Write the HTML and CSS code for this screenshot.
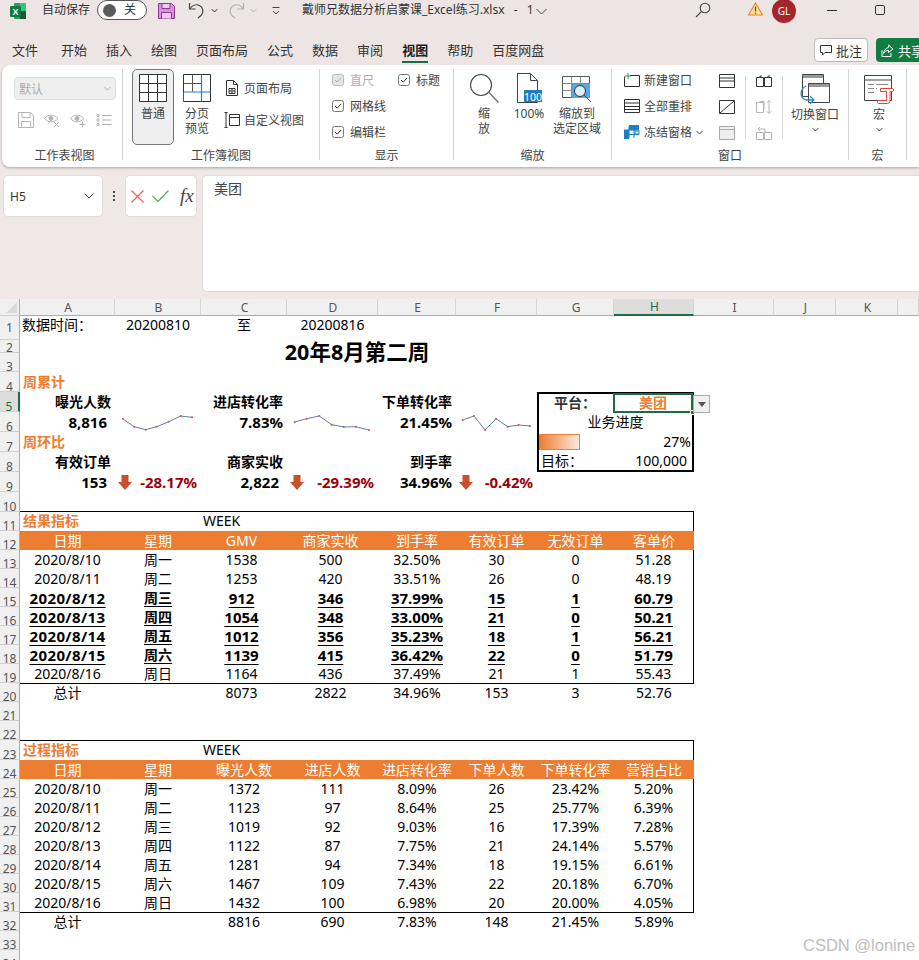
FILE: index.html
```html
<!DOCTYPE html>
<html lang="zh-CN">
<head>
<meta charset="utf-8">
<title>Excel</title>
<link rel="stylesheet" href="styles.css">
</head>
<body>
<header class="titlebar">
  <svg class="tb-logo" width="16" height="16" viewBox="0 0 16 16"><rect x="4" y="0" width="12" height="16" rx="1" fill="#21A366"/><rect x="10" y="8" width="6" height="8" fill="#185C37"/><rect x="10" y="0" width="6" height="8" fill="#33C481"/><rect x="0" y="3" width="11" height="11" rx="1" fill="#107C41"/><text x="5.5" y="12" text-anchor="middle" font-size="9" font-weight="700" fill="#fff" font-family="Liberation Sans">X</text></svg>
  <span class="tb-auto">自动保存</span>
  <span class="toggle"><i class="knob"></i><b>关</b></span>
  <svg class="tb-save" width="17" height="16" viewBox="0 0 17 16"><path d="M.5.5h13l3 3v12H.5z" fill="#DA8FDC" stroke="#8E3A90"/><path d="M4 .5h8v5H4zM3.500 15.500v-6h10v6" fill="#EFCDEF" stroke="#8E3A90"/></svg>
  <svg class="tb-undo" width="18" height="18" viewBox="0 0 18 18" fill="none" stroke="#444" stroke-width="1.200"><path d="M1.500 2v6h6"/><path d="M1.800 8C4 4.500 8 3 11.500 4.500 15.500 6.500 16 11.500 13 14.500L10 17"/></svg>
  <svg class="chev tb-c1" width="7" height="5" viewBox="0 0 7 5" fill="none" stroke="#444"><path d="M.5 1l3 3 3-3"/></svg>
  <svg class="tb-redo" width="18" height="18" viewBox="0 0 18 18" fill="none" stroke="#B5B0B0" stroke-width="1.200"><path d="M16.500 2v6h-6"/><path d="M16.200 8C14 4.500 10 3 6.500 4.500 2.500 6.500 2 11.500 5 14.500L8 17"/></svg>
  <svg class="chev tb-c2" width="7" height="5" viewBox="0 0 7 5" fill="none" stroke="#B5B0B0"><path d="M.5 1l3 3 3-3"/></svg>
  <svg class="tb-cust" width="8" height="8" viewBox="0 0 8 8" fill="none" stroke="#444"><path d="M.5 .5h7M1 4l3 3 3-3"/></svg>
  <span class="tb-file">戴师兄数据分析启蒙课_Excel练习.xlsx&nbsp; - &nbsp;1</span>
  <svg class="chev tb-c3" width="11" height="7" viewBox="0 0 11 7" fill="none" stroke="#444"><path d="M.5 1l5 5 5-5"/></svg>
  <svg class="tb-search" width="16" height="16" viewBox="0 0 16 16" fill="none" stroke="#444" stroke-width="1.100"><circle cx="10" cy="6" r="4.800"/><path d="M6.500 9.500L1 15"/></svg>
  <svg class="tb-warn" width="15" height="14" viewBox="0 0 15 14"><path d="M7.500 1L14.500 13H.5z" fill="#FCE39A" stroke="#E8862A" stroke-width="1.100"/><path d="M7.500 4.500v5M7.500 10.500v1.200" stroke="#7A4A10" stroke-width="1.300"/></svg>
  <span class="avatar">GL</span>
  <span class="tb-min"></span>
  <span class="tb-max"></span>
</header>

<nav class="tabs">
  <span class="tab first">文件</span><span class="tab">开始</span><span class="tab">插入</span><span class="tab">绘图</span><span class="tab">页面布局</span><span class="tab">公式</span><span class="tab">数据</span><span class="tab">审阅</span><span class="tab active">视图</span><span class="tab">帮助</span><span class="tab">百度网盘</span>
  <span class="btn-note"><svg width="12" height="12" viewBox="0 0 12 12" fill="none" stroke="#333"><path d="M.5 1.500h11v7H5L2.500 11V8.500h-2z"/></svg>批注</span>
  <span class="btn-share"><svg width="13" height="13" viewBox="0 0 13 13" fill="none" stroke="#fff"><path d="M1 6v6.500h9V9M7.500 1L12 5 7.500 8.500V6.500C5 6.500 3.500 7.500 2.500 9.500 3 6 5 4 7.500 3.500z"/></svg>共享</span>
</nav>

<section class="ribbon">
  <div class="group g1">
    <div class="body body-col">
      <div class="select"><span>默认</span><svg width="7" height="5" viewBox="0 0 7 5" fill="none" stroke="#aaa"><path d="M.5 1l3 3 3-3"/></svg></div>
      <div class="mini-icons">
        <svg width="16" height="16" viewBox="0 0 16 16" fill="none" stroke="#B4B4B4"><path d="M.5.500h12l3 3v12H.5zM4 .5v5h8v-5M3.500 15.500v-6h9v6"/></svg>
        <svg width="16" height="16" viewBox="0 0 16 16" fill="none" stroke="#B4B4B4"><path d="M.5 6.500C4 2 10 2 14 6.500 10 11 4 11 .5 6.500z"/><circle cx="7" cy="6.500" r="2" fill="#B4B4B4"/><path d="M10 10l5 5M15 10l-5 5"/></svg>
        <svg width="16" height="16" viewBox="0 0 16 16" fill="none" stroke="#B4B4B4"><path d="M.5 6.500C4 2 10 2 14 6.500 10 11 4 11 .5 6.500z"/><circle cx="7" cy="6.500" r="2" fill="#B4B4B4"/><path d="M12.500 9.500v6M9.500 12.500h6"/></svg>
        <svg width="16" height="16" viewBox="0 0 16 16" fill="none" stroke="#B4B4B4"><path d="M1 2.500h2v2H1zM1 7h2v2H1zM1 11.500h2v2H1zM6 3.500h9.500M6 8h9.500M6 12.500h9.500"/></svg>
      </div>
    </div>
    <div class="glabel gl1">工作表视图</div>
  </div>

  <div class="group g2">
    <div class="body body-row">
      <div class="big normal">
        <svg width="28" height="28" viewBox="0 0 28 28" fill="#fff" stroke="#333"><path d="M.5.500h27v27H.5zM9.500.5v27M18.500.5v27M.5 9.500h27M.5 18.500h27"/></svg>
        <span>普通</span>
      </div>
      <div class="big pagebreak">
        <svg width="28" height="28" viewBox="0 0 28 28" fill="none"><path d="M.5.500h27v27H.5z" fill="#fff" stroke="#333"/><path d="M9.500.5v17M.5 9.500h18M.5 27V18" stroke="#555"/><path d="M18.500.5v27M.5 18h27" stroke="#1F7FC4" stroke-width="1.200"/></svg>
        <span>分页<br>预览</span>
      </div>
      <div class="wb-list">
        <div class="row"><svg width="16" height="16" viewBox="0 0 16 16" fill="none" stroke="#333"><path d="M2.500.5h7l4 4v11h-11zM9.500.5v4h4M5 8.500h6v5H5zM5 11h6M8 8.500v5"/></svg>页面布局</div>
        <div class="row"><svg width="16" height="16" viewBox="0 0 16 16" fill="none" stroke="#333"><path d="M.5.500h3M2 .5v15M.5 15.500h3M5.500 2.500h10v11h-10zM5.500 5.500h10"/></svg>自定义视图</div>
      </div>
    </div>
    <div class="glabel">工作簿视图</div>
  </div>

  <div class="group g3">
    <div class="body checks">
      <label class="check off"><svg width="12" height="12" viewBox="0 0 12 12"><rect x=".5" y=".5" width="11" height="11" rx="2" fill="#E6E6E6" stroke="#BBB"/><path d="M3 6l2.200 2.200L9 4" fill="none" stroke="#AAA"/></svg>直尺</label>
      <label class="check"><svg width="12" height="12" viewBox="0 0 12 12"><rect x=".5" y=".5" width="11" height="11" rx="2" fill="#fff" stroke="#777"/><path d="M3 6l2.200 2.200L9 4" fill="none" stroke="#333"/></svg>标题</label>
      <label class="check wide"><svg width="12" height="12" viewBox="0 0 12 12"><rect x=".5" y=".5" width="11" height="11" rx="2" fill="#fff" stroke="#777"/><path d="M3 6l2.200 2.200L9 4" fill="none" stroke="#333"/></svg>网格线</label>
      <label class="check wide"><svg width="12" height="12" viewBox="0 0 12 12"><rect x=".5" y=".5" width="11" height="11" rx="2" fill="#fff" stroke="#777"/><path d="M3 6l2.200 2.200L9 4" fill="none" stroke="#333"/></svg>编辑栏</label>
    </div>
    <div class="glabel">显示</div>
  </div>

  <div class="group g4">
    <div class="body body-row">
      <div class="big zoom1">
        <svg width="30" height="30" viewBox="0 0 30 30" fill="none" stroke="#444" stroke-width="1.100"><circle cx="12" cy="12" r="10.500"/><path d="M20 19.500L29.500 29.500" stroke="#666"/></svg>
        <span>缩<br>放</span>
      </div>
      <div class="big zoom2">
        <svg width="26" height="30" viewBox="0 0 26 30"><path d="M1.500.5h13l7 7v22h-20z" fill="#fff" stroke="#444"/><path d="M14.500.5v7h7" fill="none" stroke="#444"/><rect x="8" y="17" width="18" height="12" fill="#1C7FC3"/><text x="17" y="27.500" font-size="10.500" text-anchor="middle" fill="#fff" font-family="Noto Sans">100</text></svg>
        <span>100%</span>
      </div>
      <div class="big zoom3">
        <svg width="30" height="27" viewBox="0 0 30 27" fill="none"><path d="M.5.500h27v21H.5z" stroke="#555"/><path d="M9.500.5v21M18.500.5v7M.5 7.500h27M.5 14.500h9" stroke="#888"/><rect x="10" y="8" width="18" height="14" fill="#5AA9DE"/><circle cx="18" cy="15" r="5.500" fill="#DCEEFA" stroke="#333"/><path d="M22 19l7 7" stroke="#444"/></svg>
        <span>缩放到<br>选定区域</span>
      </div>
    </div>
    <div class="glabel">缩放</div>
  </div>

  <div class="group g5">
    <div class="body body-row">
      <div class="win-list">
        <div class="row"><svg width="16" height="14" viewBox="0 0 16 14" fill="none"><path d="M.5 3.500v10h15v-11H6" stroke="#333"/><path d="M4 0v6M1 3h6" stroke="#2E9C4A"/></svg>新建窗口</div>
        <div class="row"><svg width="16" height="14" viewBox="0 0 16 14" fill="none" stroke="#333"><path d="M.5.500h15v13H.5zM.5 4h15M.5 7.500h15M.5 10.500h15"/></svg>全部重排</div>
        <div class="row"><svg width="16" height="14" viewBox="0 0 16 14"><path d="M5 1v12M10 1v12M0 5h15M0 9.500h15" stroke="#1C7FC3"/><rect x="0" y="5" width="5" height="9" fill="#1C7FC3"/><rect x="5" y="0" width="10" height="5" fill="#1C7FC3"/><rect x="11" y="6" width="4" height="3" fill="#fff" stroke="#1C7FC3"/></svg>冻结窗格<svg class="chev-in" width="7" height="5" viewBox="0 0 7 5" fill="none" stroke="#444"><path d="M.5 1l3 3 3-3"/></svg></div>
      </div>
      <div class="win-icons col-a">
        <svg width="16" height="14" viewBox="0 0 16 14" fill="none" stroke="#333"><path d="M.5.500h15v13H.5zM.5 4h15M.5 7h15"/></svg>
        <svg width="16" height="14" viewBox="0 0 16 14" fill="none" stroke="#333"><path d="M.5.500h15v13H.5zM1 13L15 1"/></svg>
        <svg width="16" height="14" viewBox="0 0 16 14" fill="#EEE" stroke="#AAA"><path d="M.5.500h15v13H.5zM.5 3.500h15"/></svg>
      </div>
      <span class="vsep"></span>
      <div class="win-icons col-b">
        <svg width="16" height="14" viewBox="0 0 16 14" fill="none" stroke="#333"><path d="M.5 3.500h7v9h-7zM8.500 3.500h7v9h-7zM3 3.500L5 1.500V3M11 3.500L13 1.500V3"/></svg>
        <svg width="16" height="14" viewBox="0 0 16 14" fill="none" stroke="#B4B4B4"><path d="M.5 2.500h7v10h-7zM3 2.500l2-1h3v8M13 .5v13M11 2.500l2-2 2 2M11 11.500l2 2 2-2"/></svg>
        <svg width="16" height="14" viewBox="0 0 16 14" fill="none" stroke="#B4B4B4"><path d="M.5 6.500h7v7h-7zM8.500 6.500h7v7h-7zM2 3h7v3M2 3l2-2M2 3l2 2"/></svg>
      </div>
      <span class="vsep"></span>
      <div class="big switch">
        <svg width="32" height="30" viewBox="0 0 32 30" fill="none"><path d="M3.500.5h21v22h-21z" fill="#fff" stroke="#444"/><rect x="4" y="1" width="20" height="3" fill="#999"/><path d="M9.500 9.500h21v19h-21z" fill="#fff" stroke="#444"/><rect x="10" y="10" width="20" height="3" fill="#999"/><path d="M7 12C1 15 0 24 7 26h8M11 22l4 4-4 4" stroke="#2B8AD0" stroke-width="1.300"/></svg>
        <span>切换窗口</span>
        <svg class="chev-b" width="7" height="5" viewBox="0 0 7 5" fill="none" stroke="#444"><path d="M.5 1l3 3 3-3"/></svg>
      </div>
    </div>
    <div class="glabel">窗口</div>
  </div>

  <div class="group g6">
    <div class="body body-row">
      <div class="big macro">
        <svg width="31" height="29" viewBox="0 0 31 29" fill="none"><path d="M.5.500h27v25H.5zM.5 5h27" stroke="#444"/><path d="M4 9.500h6M12 9.500h12M4 13.500h6M12 13.500h1M4 17.500h6" stroke="#888"/><path d="M16.500 13.500h12c1.500 0 1.500 3 0 3H26V25c0 2.500-1 3.500-2.500 3.500h-9c-1.500 0-1.500-3-.5-3h9c-.5 0-.5-1-.5-2V16.500h-6z" fill="#fff" stroke="#E8403A"/></svg>
        <span>宏</span>
        <svg class="chev-b" width="7" height="5" viewBox="0 0 7 5" fill="none" stroke="#444"><path d="M.5 1l3 3 3-3"/></svg>
      </div>
    </div>
    <div class="glabel">宏</div>
  </div>
</section>

<section class="formula">
  <div class="namebox"><span>H5</span><svg width="10" height="6" viewBox="0 0 10 6" fill="none" stroke="#444"><path d="M.5.500l4.500 4.500 4.500-4.500"/></svg></div>
  <span class="dots"></span>
  <div class="funcbox">
    <svg width="13" height="13" viewBox="0 0 13 13" fill="none" stroke="#E8615C" stroke-width="1.200"><path d="M.5.500l12 12M12.500.5l-12 12"/></svg>
    <svg width="17" height="12" viewBox="0 0 17 12" fill="none" stroke="#55A868" stroke-width="1.200"><path d="M.5 6l5.500 5.500L16.500.5"/></svg>
    <span class="fx">fx</span>
  </div>
  <div class="fbar">美团</div>
</section>

<main class="sheetwrap">
<table class="sheet">
  <colgroup><col class="c0"><col class="ca"><col class="cb"><col class="cc"><col class="cd"><col class="ce"><col class="cf"><col class="cg"><col class="ch"><col class="ci"><col class="cj"><col class="ck"><col class="cl"></colgroup>
  <tr class="hdr"><th class="corner"><i></i></th><th>A</th><th>B</th><th>C</th><th>D</th><th>E</th><th>F</th><th>G</th><th class="hsel">H</th><th>I</th><th>J</th><th>K</th><th></th></tr>
  <tr class="h24"><th>1</th><td class="left">数据时间：</td><td>20200810</td><td>至</td><td>20200816</td><td colspan="8"></td></tr>
  <tr class="h13"><th>2</th><td colspan="8" rowspan="2" class="main-title">20年8月第二周</td><td colspan="4" rowspan="2"></td></tr>
  <tr class="h19"><th>3</th></tr>
  <tr class="h20"><th>4</th><td colspan="12" class="sect">周累计</td></tr>
  <tr class="h20"><th class="rsel">5</th><td class="kl">曝光人数</td><td></td><td class="kl">进店转化率</td><td></td><td class="kl">下单转化率</td><td></td><td class="bx-tl plat">平台：</td><td class="bx-tr cur">美团<i class="selbox"></i><i class="handle"></i><i class="dd"></i></td><td colspan="4"></td></tr>
  <tr class="h20"><th>6</th><td class="kv">8,816</td><td><svg class="spark" width="86" height="20" viewBox="115 412 86 20"><polyline points="122.700,418.700 134,426.700 145.700,429.700 156.700,426.700 168.700,421.700 180.700,416 192,417.300"/><g><circle cx="122.700" cy="418.700" r="1"/><circle cx="134" cy="426.700" r="1"/><circle cx="145.700" cy="429.700" r="1"/><circle cx="156.700" cy="426.700" r="1"/><circle cx="168.700" cy="421.700" r="1"/><circle cx="180.700" cy="416" r="1"/><circle cx="192" cy="417.300" r="1"/></g></svg></td><td class="kv kp">7.83%</td><td><svg class="spark" width="91" height="20" viewBox="287 412 91 20"><polyline points="294.700,422 306.700,418.700 319.300,416 331.700,424.700 343.700,427 355.700,426.700 369,430"/><g><circle cx="294.700" cy="422" r="1"/><circle cx="306.700" cy="418.700" r="1"/><circle cx="319.300" cy="416" r="1"/><circle cx="331.700" cy="424.700" r="1"/><circle cx="343.700" cy="427" r="1"/><circle cx="355.700" cy="426.700" r="1"/><circle cx="369" cy="430" r="1"/></g></svg></td><td class="kv kp">21.45%</td><td><svg class="spark" width="81" height="20" viewBox="456 412 81 20"><polyline points="462.700,420 474,416 485,430 496,418.700 507.700,426.700 518.700,425 530,426"/><g><circle cx="462.700" cy="420" r="1"/><circle cx="474" cy="416" r="1"/><circle cx="485" cy="430" r="1"/><circle cx="496" cy="418.700" r="1"/><circle cx="507.700" cy="426.700" r="1"/><circle cx="518.700" cy="425" r="1"/><circle cx="530" cy="426" r="1"/></g></svg></td><td colspan="2" class="bx-lr">业务进度</td><td colspan="4"></td></tr>
  <tr class="h20"><th>7</th><td colspan="6" class="sect">周环比</td><td class="bx-l"><span class="databar"></span></td><td class="bx-r pct">27%</td><td colspan="4"></td></tr>
  <tr class="h20"><th>8</th><td class="kl">有效订单</td><td></td><td class="kl">商家实收</td><td></td><td class="kl">到手率</td><td></td><td class="bx-bl tgt">目标：</td><td class="bx-br goal">100,000</td><td colspan="4"></td></tr>
  <tr class="h20"><th>9</th><td class="kv">153</td><td class="delta"><svg class="arrow" width="14" height="15" viewBox="0 0 14 15"><path d="M3.500 0h7v7H14L7 15 0 7h3.500z" fill="#C9502F"/></svg>-28.17%</td><td class="kv">2,822</td><td class="delta"><svg class="arrow" width="14" height="15" viewBox="0 0 14 15"><path d="M3.500 0h7v7H14L7 15 0 7h3.500z" fill="#C9502F"/></svg>-29.39%</td><td class="kv kp">34.96%</td><td class="delta"><svg class="arrow" width="14" height="15" viewBox="0 0 14 15"><path d="M3.500 0h7v7H14L7 15 0 7h3.500z" fill="#C9502F"/></svg>-0.42%</td><td colspan="6"></td></tr>
  <tr class="h20 under"><th>10</th><td colspan="8"></td><td colspan="4"></td></tr>
  <tr class="h19 lift"><th>11</th><td class="sect">结果指标</td><td></td><td class="wk">WEEK</td><td colspan="4"></td><td class="edge"></td><td colspan="4"></td></tr>
  <tr class="h19 head t1"><th>12</th><td>日期</td><td>星期</td><td>GMV</td><td>商家实收</td><td>到手率</td><td>有效订单</td><td>无效订单</td><td>客单价</td><td class="blank" colspan="4"></td></tr>
  <tr class="h19 t1"><th>13</th><td>2020/8/10</td><td>周一</td><td>1538</td><td>500</td><td>32.50%</td><td>30</td><td>0</td><td class="edge">51.28</td><td colspan="4"></td></tr>
  <tr class="h19 t1"><th>14</th><td>2020/8/11</td><td>周二</td><td>1253</td><td>420</td><td>33.51%</td><td>26</td><td>0</td><td class="edge">48.19</td><td colspan="4"></td></tr>
  <tr class="h19 t1 hl"><th>15</th><td>2020/8/12</td><td>周三</td><td>912</td><td>346</td><td>37.99%</td><td>15</td><td>1</td><td class="edge">60.79</td><td colspan="4"></td></tr>
  <tr class="h19 t1 hl"><th>16</th><td>2020/8/13</td><td>周四</td><td>1054</td><td>348</td><td>33.00%</td><td>21</td><td>0</td><td class="edge">50.21</td><td colspan="4"></td></tr>
  <tr class="h19 t1 hl"><th>17</th><td>2020/8/14</td><td>周五</td><td>1012</td><td>356</td><td>35.23%</td><td>18</td><td>1</td><td class="edge">56.21</td><td colspan="4"></td></tr>
  <tr class="h19 t1 hl"><th>18</th><td>2020/8/15</td><td>周六</td><td>1139</td><td>415</td><td>36.42%</td><td>22</td><td>0</td><td class="edge">51.79</td><td colspan="4"></td></tr>
  <tr class="h19 t1"><th>19</th><td>2020/8/16</td><td>周日</td><td>1164</td><td>436</td><td>37.49%</td><td>21</td><td>1</td><td class="edge">55.43</td><td colspan="4"></td></tr>
  <tr class="h19 t1 total"><th>20</th><td>总计</td><td></td><td>8073</td><td>2822</td><td>34.96%</td><td>153</td><td>3</td><td>52.76</td><td class="blank" colspan="4"></td></tr>
  <tr class="h19"><th>21</th><td colspan="12"></td></tr>
  <tr class="h19"><th>22</th><td colspan="12"></td></tr>
  <tr class="h20 total lift"><th>23</th><td class="sect">过程指标</td><td></td><td class="wk">WEEK</td><td colspan="4"></td><td class="edge"></td><td class="blank" colspan="4"></td></tr>
  <tr class="h19 head"><th>24</th><td>日期</td><td>星期</td><td>曝光人数</td><td>进店人数</td><td>进店转化率</td><td>下单人数</td><td>下单转化率</td><td>营销占比</td><td class="blank" colspan="4"></td></tr>
  <tr class="h19"><th>25</th><td>2020/8/10</td><td>周一</td><td>1372</td><td>111</td><td>8.09%</td><td>26</td><td>23.42%</td><td class="edge">5.20%</td><td colspan="4"></td></tr>
  <tr class="h19"><th>26</th><td>2020/8/11</td><td>周二</td><td>1123</td><td>97</td><td>8.64%</td><td>25</td><td>25.77%</td><td class="edge">6.39%</td><td colspan="4"></td></tr>
  <tr class="h19"><th>27</th><td>2020/8/12</td><td>周三</td><td>1019</td><td>92</td><td>9.03%</td><td>16</td><td>17.39%</td><td class="edge">7.28%</td><td colspan="4"></td></tr>
  <tr class="h19"><th>28</th><td>2020/8/13</td><td>周四</td><td>1122</td><td>87</td><td>7.75%</td><td>21</td><td>24.14%</td><td class="edge">5.57%</td><td colspan="4"></td></tr>
  <tr class="h19"><th>29</th><td>2020/8/14</td><td>周五</td><td>1281</td><td>94</td><td>7.34%</td><td>18</td><td>19.15%</td><td class="edge">6.61%</td><td colspan="4"></td></tr>
  <tr class="h19"><th>30</th><td>2020/8/15</td><td>周六</td><td>1467</td><td>109</td><td>7.43%</td><td>22</td><td>20.18%</td><td class="edge">6.70%</td><td colspan="4"></td></tr>
  <tr class="h19"><th>31</th><td>2020/8/16</td><td>周日</td><td>1432</td><td>100</td><td>6.98%</td><td>20</td><td>20.00%</td><td class="edge">4.05%</td><td colspan="4"></td></tr>
  <tr class="h19 total"><th>32</th><td>总计</td><td></td><td>8816</td><td>690</td><td>7.83%</td><td>148</td><td>21.45%</td><td>5.89%</td><td class="blank" colspan="4"></td></tr>
  <tr class="h19"><th>33</th><td colspan="12"></td></tr>
  <tr class="h19"><th>34</th><td colspan="12"></td></tr>
</table>
<div class="watermark">CSDN @lonine</div>
</main>
</body>
</html>
```
FILE: styles.css
```css
* { box-sizing: border-box; }
html, body { margin: 0; padding: 0; }
body {
  width: 919px;
  height: 960px;
  overflow: hidden;
  background: #EFE8E6;
  color: #333;
  font-family: "Noto Sans", "Noto Sans CJK SC", sans-serif;
  font-size: 12px;
}
svg { display: block; flex: none; }

/* title bar */
.titlebar { height: 36px; display: flex; align-items: flex-start; background: #EDE5E4; position: relative; }
.titlebar > * { flex: none; }
.tb-logo { margin: 3px 0 0 10px; }
.tb-auto { margin: 1px 0 0 16px; line-height: 18px; width: 48px; }
.toggle { margin: 0 0 0 7px; width: 50px; height: 20px; border: 1px solid #555; border-radius: 10px; background: #fff; display: flex; align-items: center; padding-left: 5px; }
.knob { width: 13px; height: 13px; border-radius: 50%; background: #5C5C5C; }
.toggle b { font-weight: 400; margin-left: 8px; line-height: 14px; }
.tb-save { margin: 3px 0 0 11px; }
.tb-undo { margin: 1px 0 0 13px; }
.tb-c1 { margin: 8px 0 0 5px; }
.tb-redo { margin: 1px 0 0 9px; }
.tb-c2 { margin: 8px 0 0 5px; }
.tb-cust { margin: 7px 0 0 15px; }
.tb-file { margin: 1px 0 0 22px; line-height: 18px; width: 231px; white-space: nowrap; word-spacing: 1.500px; }
.tb-c3 { margin: 8px 0 0 3px; }
.tb-search { margin: 2px 0 0 148px; }
.tb-warn { margin: 2px 0 0 37px; }
.avatar { margin: -1px 0 0 9px; width: 24px; height: 24px; border-radius: 50%; background: #A4262C; color: #fff; font-size: 10px; text-align: center; line-height: 24px; }
.tb-min { margin: 10px 0 0 31px; width: 10px; height: 1px; background: #333; }
.tb-max { margin: 5px 0 0 38px; width: 10px; height: 10px; border: 1px solid #333; border-radius: 2px; }

/* tabs */
.tabs { height: 29px; display: flex; align-items: flex-start; padding-left: 12px; background: #EDE5E4; font-size: 13px; position: relative; }
.tab { margin-right: 19px; line-height: 18px; margin-top: 5px; height: 26px; white-space: nowrap; flex: none; }
.tab.first { margin-right: 23px; }
.tab.active { font-weight: 700; color: #222; position: relative; }
.tab.active::after { content: ""; position: absolute; left: 0; right: 0; top: 20px; height: 2px; background: #1E6C41; }
.btn-note { position: absolute; left: 814px; top: 2px; width: 54px; height: 24px; background: #fff; border: 1px solid #BBB; border-radius: 4px; display: flex; align-items: center; justify-content: center; gap: 4px; font-size: 13px; }
.btn-share { position: absolute; left: 876px; top: 2px; width: 60px; height: 24px; background: #107C41; color: #fff; border-radius: 4px; display: flex; align-items: center; gap: 4px; padding-left: 5px; font-size: 13px; }

/* ribbon */
.ribbon { margin-left: 2px; height: 102px; padding-top: 4px; background: #fff; border-radius: 8px 0 0 8px; box-shadow: 0 1px 3px rgba(0,0,0,.3); display: flex; color: #444; }
.group { height: 91px; border-right: 1px solid #D4D4D4; display: flex; flex-direction: column; flex: none; }
.g1 { width: 121px; } .g2 { width: 197px; } .g3 { width: 134px; } .g4 { width: 158px; } .g5 { width: 237px; } .g6 { width: 58px; }
.body { flex: 1; min-height: 0; }
.glabel { height: 16px; line-height: 16px; text-align: center; margin-bottom: -3px; color: #444; font-size: 12px; position: relative; top: 1px; }
.gl1 { padding-left: 5px; }
.body-col { padding: 8px 0 0 12px; display: flex; flex-direction: column; }
.body-row { display: flex; align-items: flex-start; }
.select { width: 102px; height: 23px; border: 1px solid #DDD; border-radius: 4px; background: #EFEFEF; display: flex; align-items: center; justify-content: space-between; padding: 0 4px; color: #ABABAB; }
.mini-icons { margin: 12px 0 0 4px; display: flex; gap: 10px; }
.big { display: flex; flex-direction: column; align-items: center; flex: none; line-height: 15px; text-align: center; }
.big span { margin-top: 3px; white-space: nowrap; }
.normal { margin-left: 9px; width: 42px; height: 76px; border: 1px solid #777; border-radius: 5px; background: #EFEFEF; padding-top: 4px; }
.normal span { margin-top: 4px; }
.pagebreak { margin-left: 9px; width: 28px; padding-top: 5px; }
.pagebreak span { margin-top: 4px; }
.row { display: flex; align-items: center; gap: 4px; white-space: nowrap; }
.wb-list { margin-left: 13px; padding-top: 11px; display: flex; flex-direction: column; gap: 16px; }
.wb-list .row { height: 16px; }
.checks { padding: 4px 0 0 12px; display: grid; grid-template-columns: 66px auto; grid-auto-rows: 14px; row-gap: 12px; justify-content: start; }
.check { display: flex; align-items: center; gap: 6px; white-space: nowrap; }
.check.off { color: #ADADAD; }
.wide { grid-column: 1 / span 2; }
.zoom1 { margin-left: 14px; width: 32px; padding-top: 4px; }
.zoom2 { margin-left: 9px; width: 40px; padding-top: 4px; }
.zoom3 { margin-left: -2px; width: 60px; padding-top: 7px; }
.win-list { margin-left: 12px; width: 80px; padding-top: 3px; display: flex; flex-direction: column; gap: 12px; }
.win-list .row { height: 16px; margin-bottom: -2px; }
.win-icons { padding-top: 5px; display: flex; flex-direction: column; gap: 12px; }
.col-a { margin-left: 15px; }
.col-b { margin-left: 10px; }
.vsep { margin: 7px 0 0 10px; width: 1px; height: 62px; background: #D4D4D4; }
.switch { margin-left: 8px; width: 48px; padding-top: 5px; }
.macro { margin-left: 14px; width: 32px; padding-top: 6px; }
.chev-b { margin-top: 5px; }

/* formula bar */
.formula { height: 132px; padding: 8px 0 0 3px; display: flex; align-items: flex-start; }
.namebox { width: 100px; height: 42px; background: #fff; border: 1px solid #DDD; border-radius: 5px; display: flex; align-items: center; justify-content: space-between; padding: 0 8px 0 6px; }
.dots { margin: 20px 0 0 10px; width: 2px; height: 2px; background: #444; box-shadow: 0 -4px 0 #444, 0 4px 0 #444; }
.funcbox { margin-left: 10px; width: 72px; height: 42px; background: #fff; border: 1px solid #DDD; border-radius: 5px; display: flex; align-items: center; gap: 8px; padding-left: 5px; }
.fx { font-family: "Liberation Serif", serif; font-style: italic; font-size: 19px; color: #444; margin-left: 3px; }
.fbar { margin-left: 5px; flex: 1; height: 117px; background: #fff; border: 1px solid #DDD; border-right: 0; border-radius: 5px 0 0 5px; padding: 3px 0 0 11px; font-size: 14px; line-height: 20px; color: #444; }

/* sheet */
.sheetwrap { height: 661px; position: relative; overflow: hidden; background: #fff; }
.sheet { width: 919px; table-layout: fixed; border-collapse: separate; border-spacing: 0; font-size: 14px; color: #000; }
.c0 { width: 20px; } .ca { width: 95px; } .cb { width: 86px; } .cc { width: 86px; } .cd { width: 91px; } .ce { width: 78px; } .cf { width: 81px; } .cg { width: 77px; } .ch { width: 80px; } .ci { width: 80px; } .cj { width: 62px; } .ck { width: 62px; } .cl { width: 21px; }
.sheet td { padding: 0; text-align: center; line-height: 18px; white-space: nowrap; vertical-align: middle; }
.sheet th { padding: 0; font-weight: 400; background: #F0F0F0; color: #555; font-size: 12px; }
.sheet tr > th:first-child { border-right: 1px solid #ABABAB; border-bottom: 1px solid #D0D0D0; line-height: 8px; vertical-align: bottom; text-align: center; padding: 0; }
.hdr { height: 17px; }
.sheet .hdr th { line-height: 15px; border-right: 1px solid #D4D4D4; border-bottom: 1px solid #ABABAB; vertical-align: middle; padding-left: 2px; }
.corner { position: relative; }
.corner i { position: absolute; right: 2px; bottom: 2px; width: 0; height: 0; border-left: 11px solid transparent; border-bottom: 11px solid #DADADA; }
.sheet .hdr .hsel { background: #DDD; color: #1E6C41; border-bottom: 2px solid #1E6C41; }
.sheet tr > th.rsel { background: #DDD; color: #1E6C41; border-right: 2px solid #1E6C41; }
.h24 { height: 24px; } .h13 { height: 13px; } .h19 { height: 19px; } .h20 { height: 20px; }
.sheet tr.h24 > th:first-child { vertical-align: middle; line-height: 12px; }
.sheet .h24 td { padding-bottom: 6px; }
.sheet td.left { text-align: left; padding-left: 2px; }
.sheet td.main-title { font-size: 21.500px; font-weight: 700; padding-bottom: 9px; }
.sheet td.sect { text-align: left; padding-left: 3px; color: #ED7D31; font-weight: 700; }
.sheet .lift td { padding-bottom: 1px; }
.sheet td.kl { text-align: right; padding-right: 4px; font-weight: 700; }
.sheet td.kv { text-align: right; padding-right: 8px; font-weight: 700; font-size: 15px; }
.sheet td.kv.kp { padding-right: 4px; }
.sheet td.delta { text-align: right; padding-right: 4px; color: #9C0006; font-weight: 700; font-size: 15px; position: relative; }
.arrow { position: absolute; left: 3px; top: 3px; }
.spark { overflow: visible; }
.spark polyline { fill: none; stroke: #5E7FA8; stroke-width: 1; }
.spark circle { fill: #D9534F; }
.under td { border-bottom: 1px solid #000; }
.under td:last-child { border-bottom: 0; }
.sheet td.wk { text-align: left; padding-left: 2px; }
.edge { border-right: 1px solid #000; }
.head td { background: #ED7D31; color: #fff; }
.head td.blank { background: #fff; }
.total td { border-top: 1px solid #000; }
.total td.blank { border-top: 0; }
.t1 td:nth-child(4) { padding-right: 5px; }
.t1 td:nth-child(5) { padding-right: 4px; }
.hl td { font-weight: 700; font-size: 15px; text-decoration: underline; text-underline-offset: 3px; text-decoration-thickness: 1px; }
.hl td:nth-child(2) { letter-spacing: .4px; }
.hl td:nth-child(3) { font-size: 14px; }

/* control box */
.bx-tl { border-top: 2px solid #000; border-left: 2px solid #000; }
.bx-tr { border-top: 2px solid #000; border-right: 2px solid #000; }
.bx-lr { border-left: 2px solid #000; border-right: 2px solid #000; }
.bx-l { border-left: 2px solid #000; }
.bx-r { border-right: 2px solid #000; }
.bx-bl { border-left: 2px solid #000; border-bottom: 2px solid #000; }
.bx-br { border-right: 2px solid #000; border-bottom: 2px solid #000; }
.sheet td.plat { font-weight: 700; color: #333; padding-right: 3px; }
.sheet td.cur { color: #ED7D31; font-weight: 700; position: relative; }
.selbox { position: absolute; left: -1px; right: -1px; top: -1px; bottom: -1px; border: 2px solid #1E6C41; }
.handle { position: absolute; right: -3px; bottom: -3px; width: 5px; height: 5px; background: #1E6C41; border: 1px solid #fff; }
.dd { position: absolute; left: 79px; top: 1px; width: 17px; height: 18px; background: #F0F0F0; border: 1px solid #ABABAB; }
.dd::after { content: ""; position: absolute; left: 4px; top: 6px; border-left: 4px solid transparent; border-right: 4px solid transparent; border-top: 5px solid #555; }
.databar { display: block; width: 41px; height: 16px; background: linear-gradient(90deg, #ED7D31, #FBE5D6 95%); border: 1px solid #ED7D31; }
.sheet td.pct { text-align: right; padding-right: 1px; }
.sheet td.tgt { text-align: left; padding-left: 2px; }
.sheet td.goal { text-align: right; padding-right: 5px; }

.watermark { position: absolute; left: 803px; top: 636px; font-family: "Liberation Sans", sans-serif; font-size: 16.500px; line-height: 20px; color: #BDBDBD; white-space: nowrap; }
```
